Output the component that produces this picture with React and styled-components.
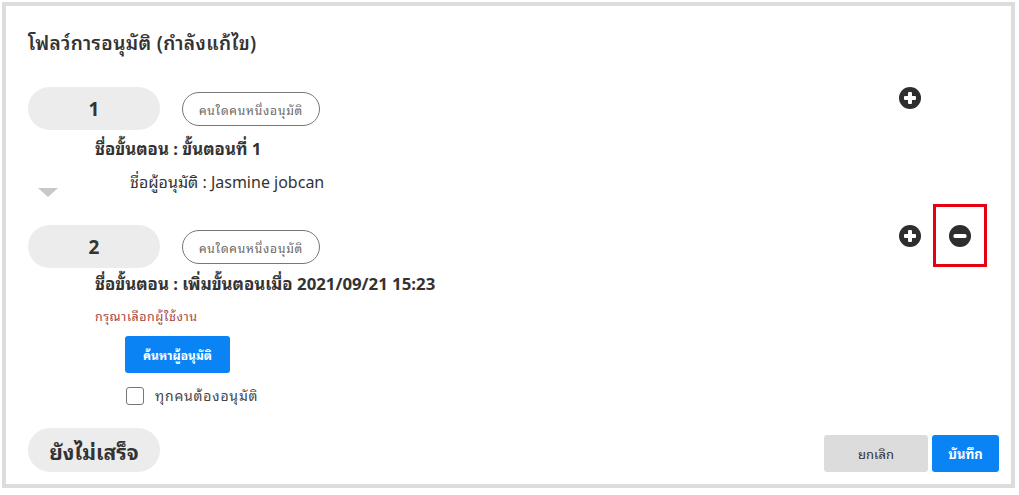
import React from "react";
import styled, { createGlobalStyle } from "styled-components";

const Global = createGlobalStyle`
  html, body { margin: 0; padding: 0; background: #fff; }
  body { font-family: "Noto Sans", "Noto Sans Thai Looped", "Noto Sans Thai UI", "Loma", "Garuda", "Noto Sans Thai", "DejaVu Sans", sans-serif; color: #333; }
`;

const Frame = styled.div`
  margin: 2px;
  border: 4px solid #dcdcdc;
  background: #fff;
  padding: 25px 12px 12px 22px;
  box-sizing: border-box;
  width: 1013px;
  height: 486px;
  display: flex;
  flex-direction: column;
`;

const Title = styled.h1`
  margin: 0;
  font-size: 19px;
  letter-spacing: 0.4px;
  line-height: 24px;
  font-weight: 600;
  color: #333;
`;

const StepRow = styled.div`
  display: flex;
  align-items: flex-start;
  margin-top: ${(p) => p.$mt}px;
`;

const StepPill = styled.div`
  width: 132px;
  height: 43px;
  border-radius: 22px;
  background: #ececec;
  display: flex;
  align-items: center;
  justify-content: center;
  font-size: 19px;
  font-weight: 700;
  color: #333;
`;

const ModePill = styled.div`
  margin-left: 22px;
  margin-top: 5px;
  width: 138px;
  height: 34px;
  box-sizing: border-box;
  border: 1px solid #777;
  border-radius: 17px;
  display: flex;
  align-items: center;
  justify-content: center;
  font-size: 12px;
  letter-spacing: 0.8px;
  color: #666;
`;

const Actions = styled.div`
  margin-left: auto;
  display: grid;
  grid-template-columns: 22px 22px;
  column-gap: 28px;
  padding-right: 28px;
`;

const IconSlot = styled.div`
  position: relative;
  width: 22px;
  height: 22px;
  display: flex;
  visibility: ${(p) => (p.$hidden ? "hidden" : "visible")};
`;

const Highlight = styled.span`
  position: absolute;
  left: -16px;
  top: -21px;
  width: 54px;
  height: 63px;
  box-sizing: border-box;
  border: 3px solid #e60012;
  pointer-events: none;
`;

const StepName = styled.div`
  margin-top: ${(p) => p.$mt}px;
  margin-left: 67px;
  font-size: 16.8px;
  line-height: 20px;
  font-weight: 700;
  color: #333;
`;

const ApproverRow = styled.div`
  display: flex;
  align-items: flex-start;
  margin-top: 13px;
  height: 25px;
`;

const Arrow = styled.span`
  margin-left: 10px;
  margin-top: 16px;
  width: 0;
  height: 0;
  border-left: 10px solid transparent;
  border-right: 10px solid transparent;
  border-top: 9px solid #c8c8c8;
`;

const Approver = styled.div`
  margin-left: 72px;
  font-size: 16px;
  line-height: 20px;
  color: #333;
`;

const ErrorText = styled.div`
  margin-top: 15px;
  margin-left: 67px;
  font-size: 12.5px;
  letter-spacing: 0.5px;
  line-height: 16px;
  color: #a94442;
`;

const SearchButton = styled.button`
  margin-top: 11px;
  margin-left: 97px;
  align-self: flex-start;
  width: 105px;
  height: 37px;
  border: none;
  border-radius: 3px;
  background: #0a84f5;
  color: #fff;
  font-family: inherit;
  font-size: 12px;
  font-weight: 700;
  cursor: pointer;
`;

const CheckRow = styled.label`
  margin-top: 12px;
  margin-left: 98px;
  display: flex;
  align-items: center;
  gap: 11px;
  font-size: 14px;
  line-height: 22px;
  letter-spacing: 0.8px;
  color: #444;
`;

const Box = styled.span`
  width: 18px;
  height: 18px;
  box-sizing: border-box;
  border: 1.5px solid #777;
  border-radius: 3px;
  background: #fff;
`;

const Footer = styled.div`
  margin-top: auto;
  display: flex;
  justify-content: space-between;
  align-items: flex-end;
`;

const StatusPill = styled(StepPill)`
  height: 44px;
  font-size: 21px;
`;

const ButtonGroup = styled.div`
  display: flex;
  gap: 4px;
`;

const FooterButton = styled.button`
  height: 37px;
  width: ${(p) => p.$w}px;
  border: none;
  border-radius: 3px;
  background: ${(p) => (p.$primary ? "#0a84f5" : "#dcdcdc")};
  color: ${(p) => (p.$primary ? "#fff" : "#333")};
  font-family: inherit;
  font-size: 13px;
  font-weight: ${(p) => (p.$primary ? 700 : 400)};
  cursor: pointer;
`;

const PlusIcon = () => (
  <svg width="22" height="22" viewBox="0 0 22 22">
    <circle cx="11" cy="11" r="11" fill="#2e2e2e" />
    <rect x="5" y="9" width="12" height="4" rx="1" fill="#fff" />
    <rect x="9" y="5" width="4" height="12" rx="1" fill="#fff" />
  </svg>
);

const MinusIcon = () => (
  <svg width="22" height="22" viewBox="0 0 22 22">
    <circle cx="11" cy="11" r="11" fill="#2e2e2e" />
    <rect x="4.5" y="9" width="13" height="4" rx="1.5" fill="#fff" />
  </svg>
);

export default function App() {
  return (
    <>
      <Global />
      <Frame>
        <Title>โฟลว์การอนุมัติ (กำลังแก้ไข)</Title>

        <StepRow $mt={32}>
          <StepPill>1</StepPill>
          <ModePill>คนใดคนหนึ่งอนุมัติ</ModePill>
          <Actions>
            <IconSlot><PlusIcon /></IconSlot>
            <IconSlot $hidden><MinusIcon /></IconSlot>
          </Actions>
        </StepRow>
        <StepName $mt={9}>ชื่อขั้นตอน : ขั้นตอนที่ 1</StepName>
        <ApproverRow>
          <Arrow />
          <Approver>ชื่อผู้อนุมัติ : Jasmine jobcan</Approver>
        </ApproverRow>

        <StepRow $mt={28}>
          <StepPill>2</StepPill>
          <ModePill>คนใดคนหนึ่งอนุมัติ</ModePill>
          <Actions>
            <IconSlot><PlusIcon /></IconSlot>
            <IconSlot>
              <MinusIcon />
              <Highlight />
            </IconSlot>
          </Actions>
        </StepRow>
        <StepName $mt={6}>ชื่อขั้นตอน : เพิ่มขั้นตอนเมื่อ 2021/09/21 15:23</StepName>
        <ErrorText>กรุณาเลือกผู้ใช้งาน</ErrorText>
        <SearchButton>ค้นหาผู้อนุมัติ</SearchButton>
        <CheckRow>
          <Box />
          ทุกคนต้องอนุมัติ
        </CheckRow>

        <Footer>
          <StatusPill>ยังไม่เสร็จ</StatusPill>
          <ButtonGroup>
            <FooterButton $w={104}>ยกเลิก</FooterButton>
            <FooterButton $w={67} $primary>บันทึก</FooterButton>
          </ButtonGroup>
        </Footer>
      </Frame>
    </>
  );
}
